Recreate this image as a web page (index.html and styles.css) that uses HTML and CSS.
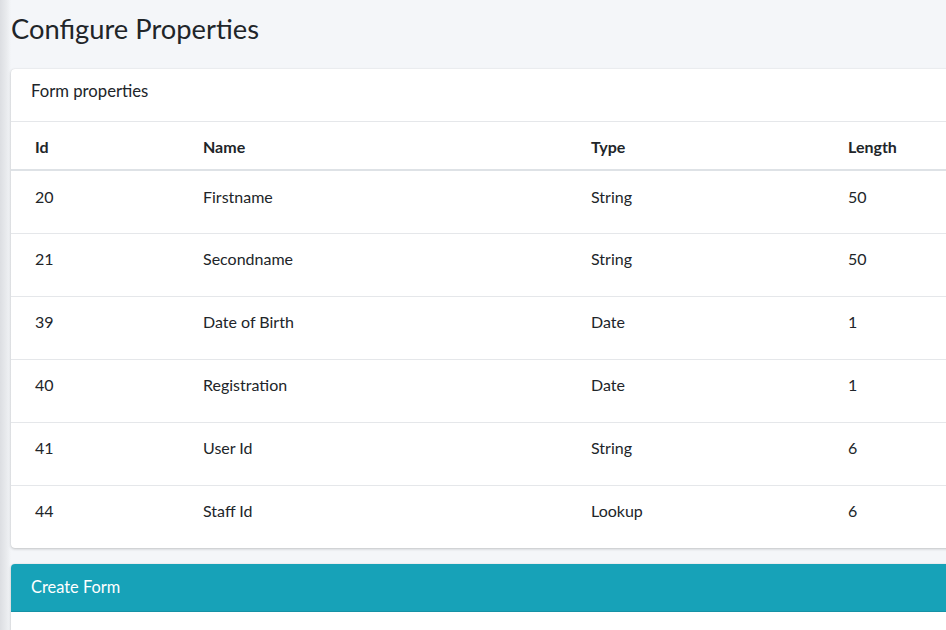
FILE: index.html
```html
<!DOCTYPE html>
<html>
<head>
<meta charset="utf-8">
<link rel="stylesheet" href="styles.css">
</head>
<body>
<div class="layout">
  <div class="side-shadow"></div>
  <main class="content">
    <h1 class="page-title">Configure Properties</h1>
    <section class="card">
      <div class="card-header">Form properties</div>
      <table class="table">
        <thead>
          <tr><th class="c-id">Id</th><th class="c-name">Name</th><th class="c-type">Type</th><th class="c-len">Length</th></tr>
        </thead>
        <tbody>
          <tr><td>20</td><td>Firstname</td><td>String</td><td>50</td></tr>
          <tr><td>21</td><td>Secondname</td><td>String</td><td>50</td></tr>
          <tr><td>39</td><td>Date of Birth</td><td>Date</td><td>1</td></tr>
          <tr><td>40</td><td>Registration</td><td>Date</td><td>1</td></tr>
          <tr><td>41</td><td>User Id</td><td>String</td><td>6</td></tr>
          <tr><td>44</td><td>Staff Id</td><td>Lookup</td><td>6</td></tr>
        </tbody>
      </table>
    </section>
    <section class="card card-info">
      <div class="card-header">Create Form</div>
      <div class="card-body"></div>
    </section>
  </main>
</div>
</body>
</html>
```

FILE: styles.css
```css
html, body {
  margin: 0;
  padding: 0;
  overflow: hidden;
}
body {
  background: #f4f6f9;
  font-family: Lato, "Open Sans", sans-serif;
  font-size: 16px;
  color: #212529;
  width: 946px;
  height: 630px;
}
.layout {
  display: flex;
  width: 1100px;
}
.side-shadow {
  width: 11px;
  flex: none;
  background: linear-gradient(to right, #dcdee2 0%, #e9ebee 60%, #f4f6f9 100%);
  min-height: 630px;
}
.content {
  flex: 1;
}
.page-title {
  margin: 0;
  padding: 11px 0 0 0;
  font-size: 27.3px;
  font-weight: 400;
  line-height: 36px;
  height: 58px;
  color: #212529;
}
.card {
  background: #fff;
  border-radius: 4px;
  box-shadow: 0 0 1px rgba(0,0,0,.125), 0 1px 3px rgba(0,0,0,.2);
  margin-bottom: 16px;
  overflow: hidden;
}
.card-header {
  padding: 0 20px;
  height: 52px;
  line-height: 45px;
  border-bottom: 1px solid #e5e7ea;
  font-size: 16.7px;
}
.table {
  border-collapse: collapse;
  width: 100%;
}
.table th, .table td {
  text-align: left;
  padding: 13px 12px 25px 12px;
  line-height: 24px;
  vertical-align: top;
}
.table th {
  font-weight: 700;
  padding-top: 13px;
  padding-bottom: 10px;
  border-bottom: 2px solid #dee2e6;
}
.table td {
  border-top: 1px solid #e5e7ea;
}
.table tbody tr:first-child td {
  border-top: 0;
  padding-top: 14px;
  padding-bottom: 24px;
}
.table th:first-child, .table td:first-child {
  padding-left: 24px;
}
.c-id { width: 144px; }
.c-name { width: 364px; }
.c-type { width: 233px; }
.card-info .card-header {
  background: #17a2b8;
  color: #fff;
  height: 47px;
  line-height: 45px;
  font-size: 16.4px;
  border-bottom: 1px solid #1592a6;
}
.card-body {
  height: 60px;
}
```
